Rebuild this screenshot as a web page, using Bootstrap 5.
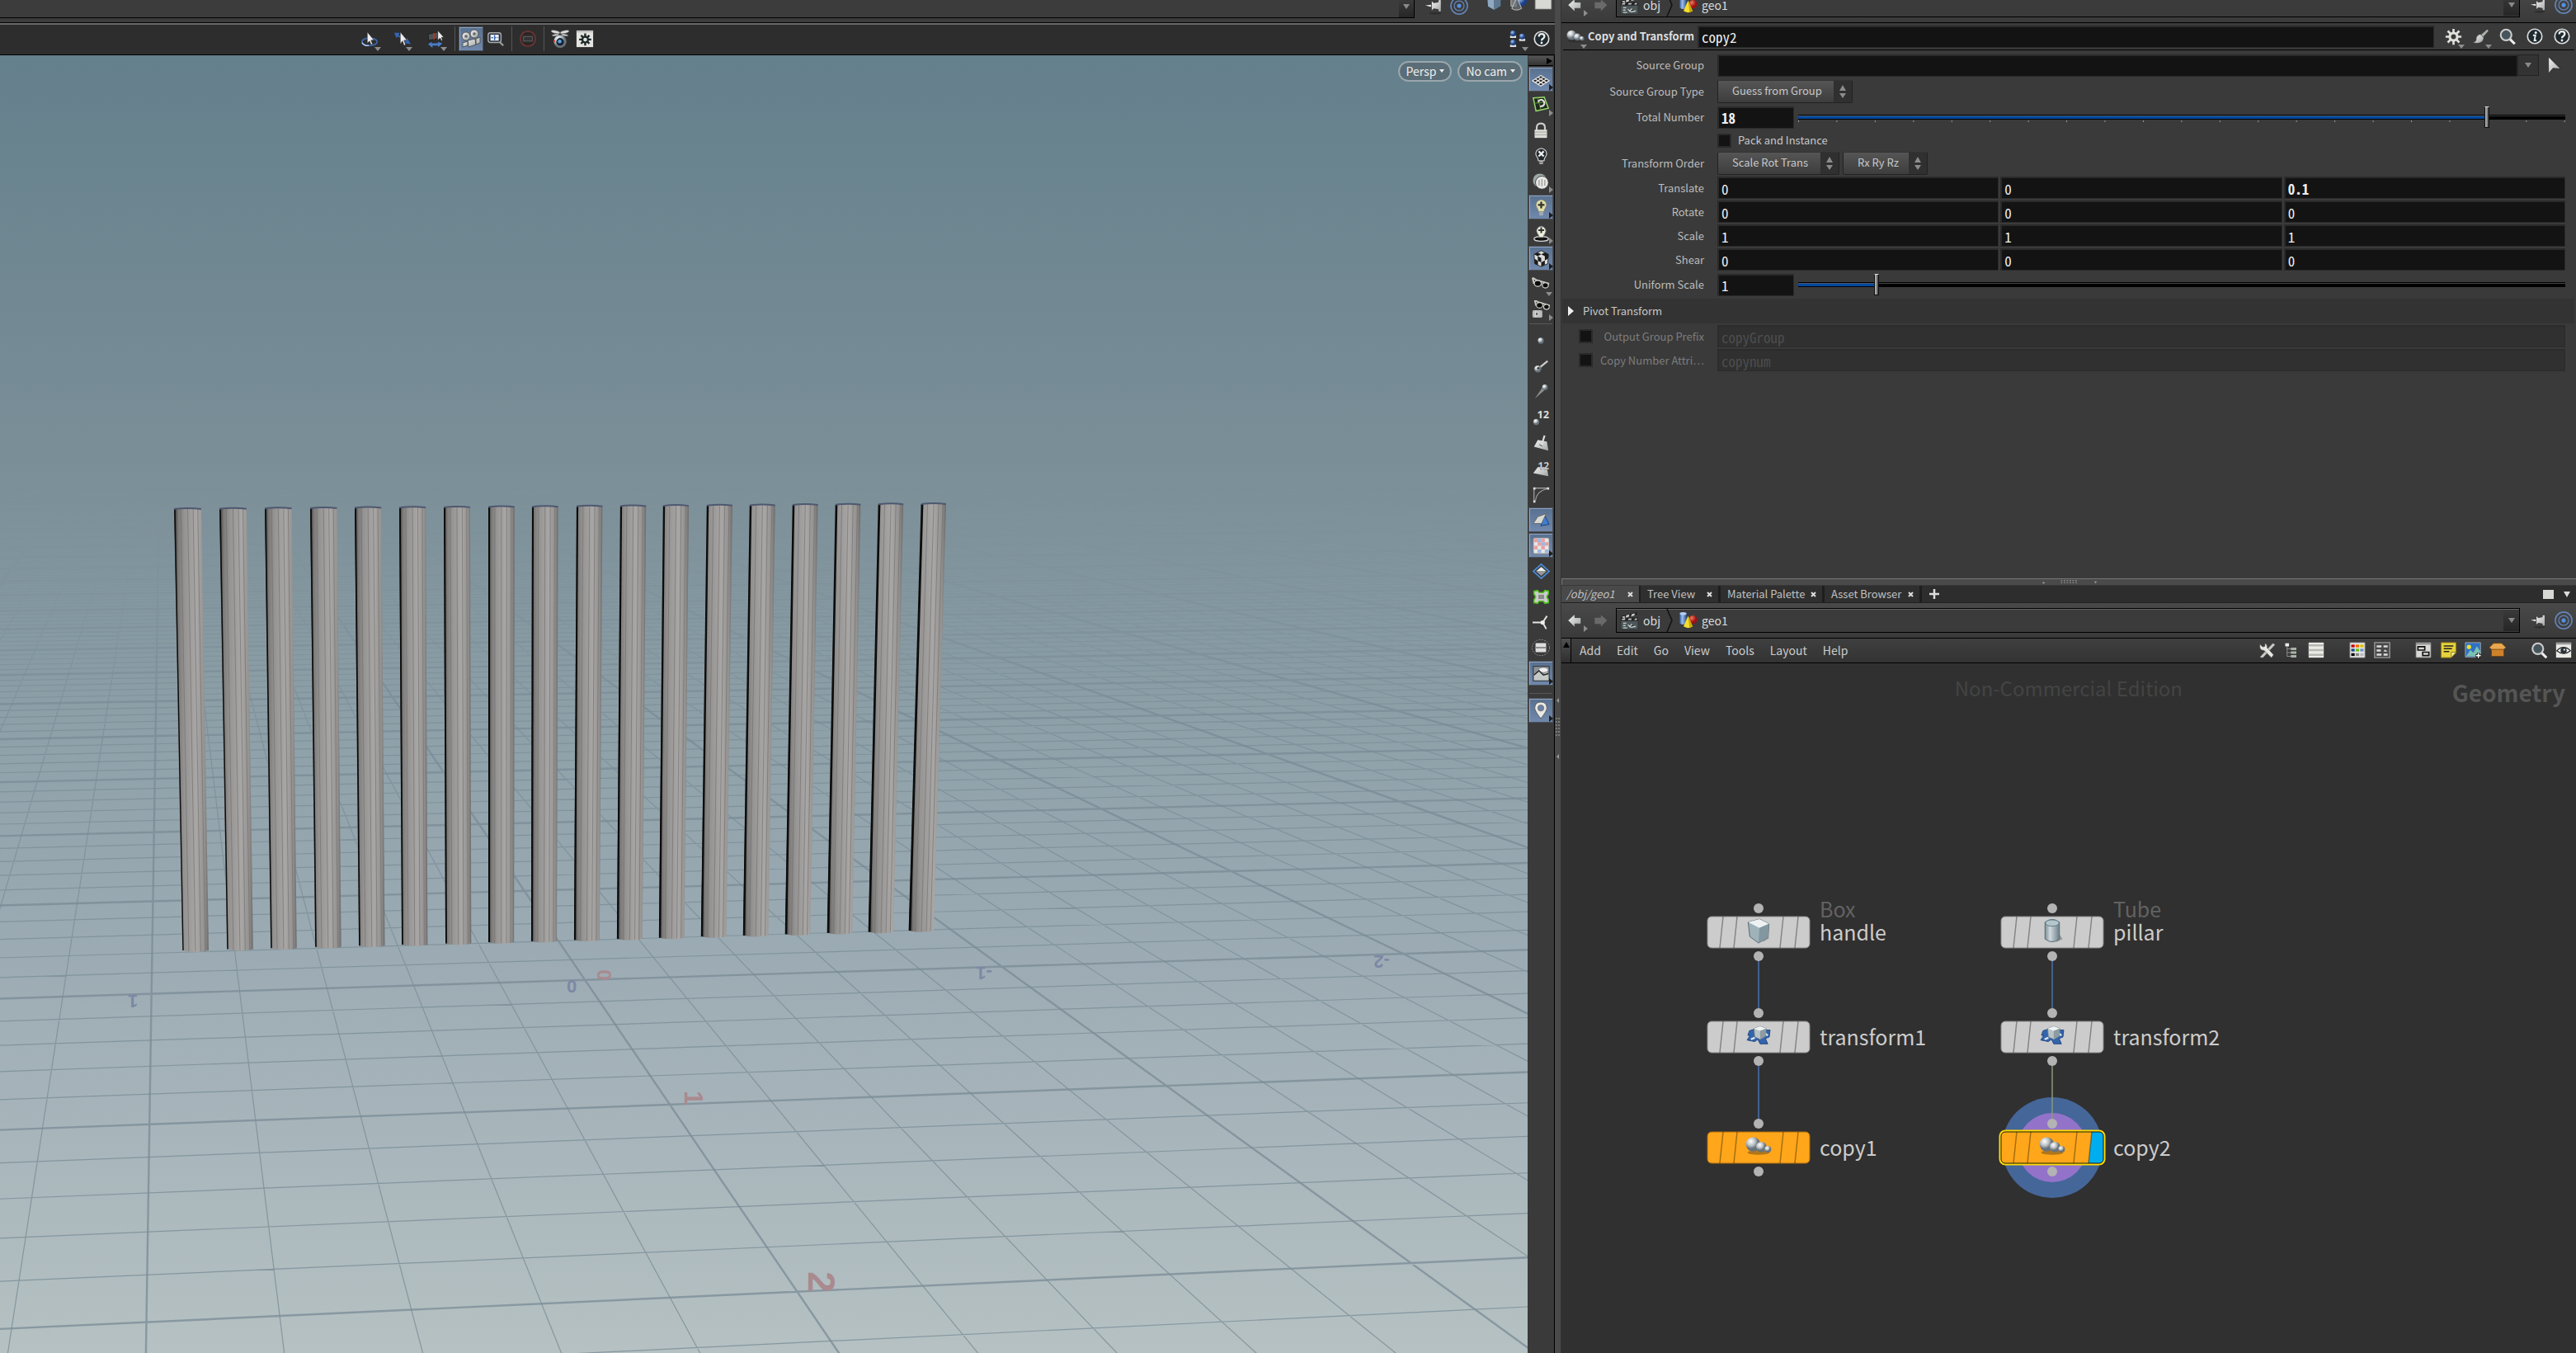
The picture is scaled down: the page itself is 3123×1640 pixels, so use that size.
<!DOCTYPE html>
<html lang="en" data-bs-theme="dark">
<head>
<meta charset="utf-8">
<meta name="viewport" content="width=device-width, initial-scale=1">
<title>Geometry editor</title>
<link href="https://cdn.jsdelivr.net/npm/bootstrap@5.3.0/dist/css/bootstrap.min.css" rel="stylesheet">
<style>
:root{--ui:"Noto Sans CJK SC","Open Sans",sans-serif;--code:"Noto Sans Mono CJK SC","DejaVu Sans Mono",monospace}
body{font-family:var(--ui);font-size:13px;line-height:20px;color:#c8c8c8;background:#3a3a3a}
svg{display:block;flex:none;overflow:visible}
a{color:inherit;text-decoration:none}
button{font:inherit;color:inherit}
.pane-left{flex:1885 1 0}
.pane-right{flex:1230 1 0;background:#3a3a3a}
.icon-btn{background:none;border:0;padding:0;width:30px;height:30px;flex:none;display:flex;align-items:center;justify-content:center;position:relative}
.icon-btn.more::after{content:"";position:absolute;right:1px;bottom:0;border:4px solid transparent;border-top:5px solid #8d8d8d;border-bottom:0}
.icon-btn.side::after{content:"";position:absolute;right:0;bottom:1px;border:4px solid transparent;border-left:5px solid #8d8d8d;border-right:0}
.icon-btn.on{background:linear-gradient(#58708f,#7089ad);box-shadow:inset 0 0 0 1px #4a4f57,inset 2px 2px 0 #8fa4c0}
.icon-btn.on.side::after{border-left-color:#1c1c1c}
.vsep{width:1px;height:30px;background:#555;flex:none}

/* viewport side */
.crop-bar{height:27px;background:#3c3c3c;overflow:hidden}
.combo-strip{height:22px;border-right:1px solid #000;border-bottom:1px solid #000}
.combo-end{width:18px;height:21px;background:linear-gradient(#3a3a3a,#262626)}
.tool-bar{height:40px;background:#2d2d2d;border-top:1px solid #000;border-bottom:1px solid #000;box-shadow:inset 0 2px 0 #6a6a6a;padding-left:433px;padding-right:1px}
.view3d{background:#67818d;overflow:hidden;min-width:0}
.view3d>svg{position:absolute;inset:0;width:100%;height:100%}
.pills{position:absolute;top:7px;right:6px;gap:7px}
.pill{height:25px;border:2px solid #9aa7ad;border-radius:13px;background:#5b6d76;color:#eee;padding:0 7px 2px 8px;font-size:14px;line-height:18px}
.side-bar{width:33px;background:#3a3a3a;border-right:1px solid #000}
.side-bar .icon-btn{width:30px;height:30px;margin:0 0 1px 1px}
.side-top{height:12px;margin:1px 1px 1px;background:linear-gradient(#555,#333);border:0;border-bottom:1px solid #000;padding:0}
.hsep{height:1px;background:#585858;margin:1px 2px 5px;flex:none}
.split-v{width:8px;background:#4a4a4a;border-right:1px solid #333}
.split-v svg{margin-top:845px}
.split-h{height:8px;background:#4a4a4a;border-top:1px solid #777;border-left:1px solid #777}

/* path bars */
.path-row{height:42px;padding-left:2px;background:linear-gradient(#494949,#3a3a3a)}
.path-box{height:30px;border:1px solid #000;box-shadow:inset 0 1px 0 #666;background:#3b3b3b;font-size:14px;color:#ddd}
.path-box a{display:flex;align-items:center;gap:5px}
.path-end{width:19px;height:26px;margin-top:1px;background:linear-gradient(#3a3a3a,#262626)}
.path-clip{height:27px;overflow:hidden;border-bottom:1px solid #000;box-sizing:content-box}
.path-clip .path-row{margin-top:-15px}

/* parameters */
.op-head{height:33px;margin:0 2px;border-bottom:1px solid #000;color:#ddd}
.op-name{font-weight:700}
.fld{background:#131313;border:2px solid #2a2a2a;border-bottom-width:1px;border-right-width:1px;color:#eee;font-family:var(--code);font-size:17px;line-height:20px;height:27px;padding:0 3px;min-width:0;border-radius:0;outline:0}
.fld:disabled{background:#303030;border-color:#2b2b2b;color:#4d4d4d}
.prow{height:29px;padding-right:13px;display:flex;align-items:center}
.prow.tall{height:32px}
.prow.mid{height:30px}
.prow.low{height:26px}
.plabel{width:173px;text-align:right;flex:none;color:#bdbdbd;white-space:nowrap}
.plabel.checked-label{display:flex;align-items:center;justify-content:space-between;padding-left:21px}
.pbody{margin-left:16px}
.num{width:93px;flex:none}
.list-btn{width:26px;height:26px;background:#333;border:1px solid #222}
.pick{appearance:none;height:28px;border:1px solid #222;border-top-color:#333;border-radius:2px;color:#c8c8c8;font-size:13px;line-height:20px;padding:0 30px 2px 17px;
 background:url("data:image/svg+xml,%3Csvg xmlns='http://www.w3.org/2000/svg' viewBox='0 0 22 26'%3E%3Cpath fill='%23303030' d='M0 0h22v26H0z'/%3E%3Cpath fill='%238c8c8c' d='M11 5l4 7H7zM11 21l4-6H7z'/%3E%3C/svg%3E") right center/22px 26px no-repeat,linear-gradient(#555,#3d3d3d)}
.pick-a{width:164px}.pick-b{width:148px}.pick-c{width:103px}
.tick{appearance:none;width:17px;height:17px;margin:0;background:#131313;border:2px solid #2a2a2a;flex:none}
.slide{appearance:none;height:27px;margin:0 0 0 5px;background:linear-gradient(#000,#000) 0 10px/100% 1px no-repeat,linear-gradient(#00489c,#00489c) 0 12px/var(--at) 3px no-repeat,linear-gradient(#4a5a70,#4a5a70) 0 11px/var(--at) 1px no-repeat,linear-gradient(#000,#000) 0 12px/100% 4px no-repeat,linear-gradient(#444,#444) 0 11px/100% 1px no-repeat;min-width:0}
.slide.ticked{background:linear-gradient(#000,#000) 0 10px/100% 1px no-repeat,linear-gradient(#00489c,#00489c) 0 12px/var(--at) 3px no-repeat,linear-gradient(#4a5a70,#4a5a70) 0 11px/var(--at) 1px no-repeat,linear-gradient(#000,#000) 0 12px/100% 4px no-repeat,linear-gradient(90deg,#999 1px,transparent 1px) 0 17px/calc((100% - 1px)/20) 2px repeat-x}
.slide::-webkit-slider-thumb{appearance:none;width:6px;height:26px;background:linear-gradient(90deg,#bbb,#7a7a7a 70%,#222);border:1px solid #111;border-top-color:#ddd;border-radius:0}
.fold{height:30px;margin:1px 2px 1px 1px;background:#333;border:0;padding:0 0 0 7px;text-align:left;gap:10px}
.faint{color:#7d7d7d}
.params{height:701px;overflow:hidden}
.params form{padding-top:2px}

/* network */
.tabs-row{height:22px;background:#2d2d2d;border-bottom:1px solid #202020;border-top:1px solid #383838}
.tab-i{background:#2f2f2f;border:0;border-right:3px solid #1e1e1e;padding:0 7px 0 8px;display:flex;align-items:center;justify-content:space-between;white-space:nowrap;color:#c0c0c0}
.tab-i.cur{background:#494949;font-style:italic;border-right-width:2px;padding-left:6px}
.tab-tools{gap:12px;padding-right:7px}
.menu-row{height:31px;border-top:1px solid #000;border-bottom:1px solid #000;background:linear-gradient(#3f3f3f,#333)}
.menu-row nav{gap:19px;padding-left:10px;padding-bottom:2px}
.menu-row a{font-size:14px;line-height:24px;color:#ccc}
.menu-row .icon-btn{height:28px}
.set-apart{margin-left:20px}
.fold-up{width:12px;border:0;border-right:1px solid #000;background:linear-gradient(#505050,#2e2e2e);padding:0}
.net{background:#303030;overflow:hidden;min-height:0}
.net-note{position:absolute;top:14px;right:477px;font-size:24px;line-height:32px;color:#444}
.net-kind{position:absolute;top:18px;right:13px;font-size:28px;line-height:34px;font-weight:700;color:#555}
.net>svg{position:absolute;left:0;top:0;width:1px;height:1px}
.node-tag{position:absolute;font-size:25px;line-height:28px;color:#ccc;white-space:nowrap}
.node-tag .kind{display:block;color:#626262}
</style>
<script src="https://cdn.jsdelivr.net/npm/bootstrap@5.3.0/dist/js/bootstrap.bundle.min.js"></script>
</head>
<body class="vh-100 overflow-hidden d-flex">

<svg width="0" height="0" class="position-absolute" aria-hidden="true">
<defs>
<linearGradient id="gl" x1="0" y1="0" x2="1" y2="1"><stop offset="0" stop-color="#f4f4f2"/><stop offset="1" stop-color="#a0a4a4"/></linearGradient>
<radialGradient id="gb" cx=".35" cy=".3"><stop offset="0" stop-color="#fff"/><stop offset=".6" stop-color="#b9c0c4"/><stop offset="1" stop-color="#68727a"/></radialGradient>
<radialGradient id="gblue" cx=".35" cy=".3"><stop offset="0" stop-color="#a8c8f4"/><stop offset="1" stop-color="#1b3f86"/></radialGradient>
<radialGradient id="gred" cx=".35" cy=".3"><stop offset="0" stop-color="#f07a60"/><stop offset="1" stop-color="#a01010"/></radialGradient>
<linearGradient id="gcyl"><stop offset="0" stop-color="#7c8c94"/><stop offset=".35" stop-color="#cfd9de"/><stop offset="1" stop-color="#6e7f88"/></linearGradient>
<linearGradient id="gbcyl"><stop offset="0" stop-color="#3d69ac"/><stop offset=".4" stop-color="#9dbde8"/><stop offset="1" stop-color="#2b4f90"/></linearGradient>
<symbol id="i-cur" viewBox="0 0 24 24"><path d="M4 1v22l6-7 10 1z" fill="url(#gl)" stroke="#222" stroke-width=".8"/></symbol>
<symbol id="i-orbit" viewBox="0 0 24 24"><ellipse cx="12" cy="16" rx="10" ry="5" fill="none" stroke="#3e66a8" stroke-width="2"/><path d="M2 17q3 5 9 4" stroke="#b9cdec" fill="none" stroke-width="1.500"/><path d="M9 3v15l3-3 2 5 2-1-2-5 4 0z" fill="#eee" stroke="#222" stroke-width=".6"/></symbol>
<symbol id="i-pan" viewBox="0 0 24 24"><path d="M1 4l7 0-1 3 10 7 1-3 5 8-8-1 1-2L6 9 4 11z" fill="#3565b2"/><path d="M9 3v16l3-4 2 6 2-1-2-6 4 0z" fill="#eee" stroke="#222" stroke-width=".6"/></symbol>
<symbol id="i-dolly" viewBox="0 0 24 24"><path d="M2 6l13-3v9L3 14z" fill="#4b5254" stroke="#1c1c1c"/><path d="M10 4v9" stroke="#d03020" stroke-width="1.400"/><path d="M2 19l5-3v2h8l0-2 6 2-5 5-1-2H8l0 3z" fill="#4a7cc6"/><path d="M15 1v13l3-3 2 4 1-1-1-4 3 0z" fill="#eee" stroke="#222" stroke-width=".6"/></symbol>
<symbol id="i-cams" viewBox="0 0 24 24"><g fill="url(#gl)" stroke="#444" stroke-width=".8"><circle cx="6" cy="9" r="5"/><circle cx="16" cy="6" r="5"/><path d="M8 14l9-2 1 7-9 3zM18 12l5-2v7l-5 2zM2 17l6-2v5l-6 2z"/></g><circle cx="6" cy="9" r="1.800" fill="#666"/><circle cx="16" cy="6" r="1.800" fill="#666"/></symbol>
<symbol id="i-frame" viewBox="0 0 24 24"><rect x="2" y="4" width="17" height="13" rx="3" fill="#26303c" stroke="#aaa" stroke-width="1.600"/><rect x="5" y="6.500" width="11" height="8" fill="#e8eef6"/><path d="M10.500 7v7M6 10.500h9" stroke="#2b5db0" stroke-width="1.600" stroke-dasharray="2.500 1.500"/><path d="M17 16l5 5" stroke="#999" stroke-width="2.500"/></symbol>
<symbol id="i-no" viewBox="0 0 24 24"><circle cx="12" cy="12" r="10" fill="#2b2525" stroke="#6c3434" stroke-width="2"/><rect x="6" y="9" width="12" height="6" fill="#333" stroke="#555" stroke-width="1.500"/></symbol>
<symbol id="i-fly" viewBox="0 0 24 24"><circle cx="12" cy="15.500" r="8.500" fill="url(#gb)"/><circle cx="12" cy="16" r="5" fill="#17202c"/><circle cx="11.500" cy="15.500" r="2.500" fill="#57a4dc"/><g fill="#ddd" stroke="#555" stroke-width=".6"><ellipse cx="6" cy="3" rx="6" ry="2" transform="rotate(12 6 3)"/><ellipse cx="18" cy="3" rx="6" ry="2" transform="rotate(-12 18 3)"/><ellipse cx="6" cy="7" rx="4.500" ry="1.300" transform="rotate(-10 6 7)"/><ellipse cx="18" cy="7" rx="4.500" ry="1.300" transform="rotate(10 18 7)"/></g><circle cx="4.500" cy="15" r="1.200" fill="#e22"/></symbol>
<symbol id="i-gearbox" viewBox="0 0 24 24"><rect x="1" y="1" width="22" height="22" fill="#e4e4e0"/><path d="M1 2.500h22" stroke="#bbb" stroke-width="2"/><g stroke="#1d2a2a" stroke-width="2.600"><path d="M12.500 5v16M4.500 13h16M7 7.500l11 11M18 7.500l-11 11"/></g><circle cx="12.500" cy="13" r="5" fill="#1d2a2a"/><circle cx="12.500" cy="13" r="2.500" fill="#e4e4e0"/></symbol>
<symbol id="i-gear" viewBox="0 0 24 24"><g stroke="#e0e0dc" stroke-width="3"><path d="M12 1v22M1 12h22M4 4l16 16M20 4L4 20"/></g><circle cx="12" cy="12" r="7" fill="#e0e0dc"/><circle cx="12" cy="12" r="3.400" fill="#3a3a3a"/></symbol>
<symbol id="i-pin" viewBox="0 0 24 24"><path d="M0 11.500l8-1v3z" fill="#eee"/><path d="M8 5l3 3 6-1V4h4v16h-4v-3l-6-1-3 3z" fill="url(#gl)" stroke="#222" stroke-width=".8"/><ellipse cx="13" cy="22" rx="8" ry="1.300" fill="#2c2c2c"/></symbol>
<symbol id="i-target" viewBox="0 0 24 24"><g fill="none" stroke="#6384b6"><circle cx="12" cy="12" r="11" stroke-width="1.800"/><circle cx="12" cy="12" r="6.500" stroke-width="1.400"/></g><circle cx="12" cy="12" r="2.800" fill="#5590e0"/></symbol>
<symbol id="i-cube" viewBox="0 0 24 24"><path d="M2 4l11-3 9 3v13l-10 6L3 18z" fill="#8fa9c2" stroke="#27323c"/><path d="M2 4l10 4 10-4-9-3z" fill="#dfe9f2"/><path d="M12 8l10-4v13l-10 6z" fill="#60788f"/></symbol>
<symbol id="i-shapes" viewBox="0 0 24 24"><path d="M2 0h7v17H2z" fill="#777" stroke="#bbb"/><circle cx="16" cy="10" r="7" fill="url(#gblue)"/><path d="M10 5L3 20q6 4 13 0z" fill="#6a7074" fill-opacity=".7" stroke="#ccc"/></symbol>
<symbol id="i-sq" viewBox="0 0 24 24"><path d="M1 0h22v21H1z" fill="#d8d8d4" stroke="#555"/></symbol>
<symbol id="i-people" viewBox="0 0 24 24"><g fill="#ddd"><path d="M3 8h8v3H3zM3 20h8v3H3zM15 12h8v3h-8z"/></g><circle cx="7" cy="5" r="3.800" fill="url(#gblue)"/><circle cx="7" cy="17" r="3.800" fill="url(#gblue)"/><circle cx="19" cy="9" r="3.800" fill="url(#gblue)"/></symbol>
<symbol id="i-help" viewBox="0 0 24 24"><circle cx="12" cy="12" r="10.500" fill="#1e2a30" stroke="#ddd" stroke-width="2"/><path d="M8 9q0-4 4-4t4 3.500q0 2-2 3.200t-2 3" fill="none" stroke="#eee" stroke-width="2.800"/><circle cx="12" cy="18" r="1.700" fill="#eee"/></symbol>
<symbol id="i-info" viewBox="0 0 24 24"><circle cx="12" cy="12" r="10.500" fill="#1e2a30" stroke="#ddd" stroke-width="2"/><circle cx="13.500" cy="6.500" r="1.800" fill="#eee"/><path d="M9.500 10.500h3.500l-1.500 7.500h3" fill="none" stroke="#eee" stroke-width="2.200"/></symbol>
<symbol id="i-find" viewBox="0 0 24 24"><path d="M15 15l7 7" stroke="#eee" stroke-width="3.500"/><circle cx="10" cy="9.500" r="7.500" fill="#46545c" stroke="#ccc" stroke-width="2.400"/></symbol>
<symbol id="i-brush" viewBox="0 0 24 24"><path d="M22 2l2 2-8 9-3-3z" fill="#aab0a8"/><path d="M12 9l5 5q-1 8-11 8l-5-1q6-1 5-6 1-5 6-6z" fill="url(#gl)" stroke="#444" stroke-width=".6"/></symbol>
<symbol id="i-balls" viewBox="0 0 24 24"><ellipse cx="12" cy="18" rx="10" ry="2" fill="#1c1c1c" opacity=".35"/><circle cx="7" cy="10.500" r="6.500" fill="url(#gb)"/><circle cx="14.500" cy="13" r="4.800" fill="url(#gb)"/><circle cx="20.500" cy="15" r="3" fill="url(#gb)"/></symbol>
<symbol id="i-back" viewBox="0 0 24 24"><path d="M1 12L11 3v5h9v9h-9v5z" fill="url(#gl)" stroke="#222" stroke-width=".6"/></symbol>
<symbol id="i-fwd" viewBox="0 0 24 24"><path d="M22 12L13 4v4H4v9h9v4z" fill="#6a6a6a"/></symbol>
<symbol id="i-clap" viewBox="0 0 24 24"><path d="M1 12h22v11H1z" fill="#4d5759" stroke="#2c3334"/><path d="M1 8h22v3.500H1zM1 6L21 1l1 3L2 9z" fill="#222"/><path d="M2 7l4-1v3zM8 5l4-1-1 3-4 1zM15 3.500l4-1-1 3-4 1zM3 9h4l-1 2H2zM11 9h4l-1 2h-4zM19 9h3l-1 2h-3z" fill="#ccc"/><path d="M4 15h4M4 18h3M4 21h5M10 17l4 3 6-1M12 20l3-4" stroke="#c8cccc" stroke-width="1.500"/></symbol>
<symbol id="i-geo" viewBox="0 0 24 24"><path d="M1 3q4-3 9 0v13q-4 3-9 0z" fill="url(#gbcyl)"/><ellipse cx="5.500" cy="3" rx="4.500" ry="2" fill="#b6cff0"/><circle cx="18.500" cy="11" r="5.500" fill="url(#gred)"/><path d="M12 6l6 14q-6 4-12 0z" fill="#f4de2c"/><path d="M12 6l2 16q3-1 4-2z" fill="#c9a90e"/></symbol>
<symbol id="i-grid" viewBox="0 0 24 24"><path d="M12 7l11 7-11 7-11-7z" fill="#222" stroke="#e6e6e6" stroke-width="1.400"/><path d="M8.300 9.300l11 7M4.700 11.700l11 7M15.700 9.300l-11 7M19.300 11.700l-11 7" stroke="#e6e6e6" stroke-width="1.500"/></symbol>
<symbol id="i-snap" viewBox="0 0 24 24"><path d="M1 2l16-1 6 16-18 4z" fill="#1f2a1c" stroke="#95d86a" stroke-width="1.800"/><path d="M7 1l5 18M2 10l18-2" stroke="#6ba24a"/><path d="M8 8q2-4 6-3 4 2 3 6-2 4-6 3" fill="none" stroke="#ddd" stroke-width="2.600"/></symbol>
<symbol id="i-lock" viewBox="0 0 24 24"><path d="M6 12V8q0-6 6-6t6 6v4" fill="none" stroke="#ccc" stroke-width="2.600"/><path d="M3 11h18v12H3z" fill="#dcdcd6"/><path d="M3 14.500h18M3 18.500h18" stroke="#9c9c98"/></symbol>
<symbol id="bulb" viewBox="0 0 24 24"><path d="M8 18q0-3-2-5.500-3-4 0-8.500 6-6 12 0 3 4.500 0 8.500-2 2.500-2 5.500z"/><path d="M9 19.500h6M9.500 22h5" stroke="#bbb" stroke-width="1.600"/></symbol>
<symbol id="i-bulbx" viewBox="0 0 24 24"><use href="#bulb" fill="#20282c" stroke="#ccc" stroke-width="1.400"/><path d="M8.500 5l7 7M15.500 5l-7 7" stroke="#eee" stroke-width="2.600"/></symbol>
<symbol id="i-bulb" viewBox="0 0 24 24"><use href="#bulb" fill="#e0dfa6" stroke="#777"/><path d="M12 4v9M7.500 8.500h9" stroke="#333" stroke-width="2.600"/></symbol>
<symbol id="i-bulbs" viewBox="0 0 24 24"><ellipse cx="12" cy="20" rx="10" ry="3.300" fill="#111" stroke="#ddd" stroke-width="1.400"/><path d="M9 18q0-3-2-5-3-4 0-8 5-5 10 0 3 4 0 8-2 2-2 5z" fill="#eeeede" stroke="#777"/><path d="M12 4v8M8 8h8" stroke="#333" stroke-width="2.300"/></symbol>
<symbol id="i-hq" viewBox="0 0 24 24"><circle cx="10" cy="10" r="9.500" fill="#9fa8a8"/><circle cx="13" cy="13" r="9" fill="#e8e8e4" stroke="#333"/><path d="M9 9v8M13 8v10M17 9v8" stroke="#999" stroke-width="1.500"/></symbol>
<symbol id="i-check" viewBox="0 0 24 24"><path d="M2 6l10-5 10 5-1 13-9 4-9-4z" fill="#dcdcda" stroke="#222"/><path d="M2 6l5-2.500L12 6 7 8.500zM12 6l5-2.500L22 6l-5 2.500zM7 8.500l5 2.500v6l-4.500-2zM17 8.500l5-2.500-.5 6-4.500 2.500zM2.500 12l5 3v6L3 19zM12 17l5-2.500v6L12 23z" fill="#1c1c1c"/></symbol>
<symbol id="i-glass" viewBox="0 0 24 24"><path d="M1 4l5 3 17 5M1 4l2 8" stroke="#c8c8c0" stroke-width="2.200" fill="none"/><ellipse cx="8" cy="11.500" rx="4.600" ry="4" fill="#0c0c0c" stroke="#d8d8d0" stroke-width="1.300"/><ellipse cx="18" cy="14" rx="4" ry="3.600" fill="#0c0c0c" stroke="#d8d8d0" stroke-width="1.300"/></symbol>
<symbol id="i-glassp" viewBox="0 0 24 24"><use href="#i-glass" x="3" y="-4" width="22" height="22"/><rect x="1" y="13" width="13" height="10" rx="2" fill="#bbb"/><path d="M5 15v6l5-3z" fill="#555" stroke="#eee"/></symbol>
<symbol id="i-dot" viewBox="0 0 24 24"><circle cx="12" cy="12" r="4" fill="url(#gb)"/></symbol>
<symbol id="i-ptn" viewBox="0 0 24 24"><path d="M10 14L21 5" stroke="#ccc" stroke-width="2.400"/><circle cx="8" cy="15.500" r="4.600" fill="url(#gb)"/><circle cx="8.500" cy="14.500" r="1.500" fill="#333"/></symbol>
<symbol id="i-trail" viewBox="0 0 24 24"><path d="M4 21L15 5l4 3z" fill="#8c8c8c"/><circle cx="17.500" cy="6" r="3.800" fill="url(#gb)"/></symbol>
<symbol id="i-nrm" viewBox="0 0 24 24"><path d="M8 8l12 2 2 12-19-5z" fill="url(#gl)"/><path d="M13 15l4-13" stroke="#ddd" stroke-width="2.400"/><path d="M10 14l4 2" stroke="#444"/></symbol>
<symbol id="i-curve" viewBox="0 0 24 24"><path d="M2 22V3h19M4 20Q6 7 20 4" fill="none" stroke="#aaa" stroke-width="1.300"/><path d="M1 2h3v3H1zM20 2h3v3h-3zM1 20h3v3H1z" fill="#ddd"/></symbol>
<symbol id="i-face" viewBox="0 0 24 24"><path d="M17 6l6 12-11 2z" fill="#3d7ed4" stroke="#1d3c70"/><path d="M8 8l11-4-6 13H2z" fill="#d8d8d2" stroke="#666"/></symbol>
<symbol id="i-uv" viewBox="0 0 24 24"><rect x="1" y="1" width="22" height="22" rx="2" fill="#e6e6e6" stroke="#777"/><path d="M2 2h5v5H2zM12 2h5v5h-5zM7 7h5v5H7zM17 7h5v5h-5zM2 12h5v5H2zM12 12h5v5h-5z" fill="#e8a0a0"/><path d="M7 2h5v5H7zM12 7h5v5h-5zM7 17h5v5H7zM17 17h5v5h-5z" fill="#9cb8e0"/></symbol>
<symbol id="i-dia" viewBox="0 0 24 24"><path d="M12 2l11 10-11 10L1 12z" fill="#3f464c" stroke="#4a90e0" stroke-width="1.800"/><path d="M12 6l7 6H5z" fill="#eee"/><path d="M5 12h14l-7 6z" fill="#999"/></symbol>
<symbol id="i-hull" viewBox="0 0 24 24"><path d="M2 4l5-1 2 3h6l2-3 5 1v4l-2 3v2l2 3v4l-5 1-2-3H9l-2 3-5-1v-4l2-3v-2L2 8z" fill="#ccc" stroke="#4fbd1c" stroke-width="1.800"/><path d="M8 9h8v6H8z" fill="#8a8a8a"/></symbol>
<symbol id="i-axis" viewBox="0 0 24 24"><path d="M0 12h14M14 12l6-9M14 12l5 9" stroke="#e4e4e0" stroke-width="2.200"/><circle cx="14" cy="12" r="3" fill="#eee"/></symbol>
<symbol id="i-oval" viewBox="0 0 24 24"><ellipse cx="12" cy="12" rx="11.500" ry="10.500" fill="none" stroke="#999" stroke-dasharray="2 1.500"/><rect x="5" y="6" width="14" height="12" rx="1" fill="#ddd"/><path d="M5 12h14" stroke="#888" stroke-width="2"/></symbol>
<symbol id="i-pic" viewBox="0 0 24 24"><rect x="1" y="2" width="22" height="20" fill="#8a9296" stroke="#222"/><path d="M2 14l7-6 6 5 4-3 3 2v9H2z" fill="#c4c8c6"/><ellipse cx="15" cy="7" rx="6" ry="3" fill="#eee"/><path d="M2 14l7-6 6 6 7-2" stroke="#222" fill="none" stroke-width="1.500"/></symbol>
<symbol id="i-loc" viewBox="0 0 24 24"><path d="M12 23Q4 13 4 9q0-8 8-8t8 8q0 4-8 14z" fill="#e8e8e4" stroke="#555"/><circle cx="12" cy="9" r="4" fill="#6882a5" stroke="#777"/></symbol>
<symbol id="i-tools" viewBox="0 0 24 24"><path d="M2 21L20 2l3 2L6 22z" fill="#c8c8c4"/><path d="M2 3l4 4 3-1 0-4q4 2 3 6l9 10-3 4L8 12Q3 12 2 8z" fill="#e6e6e2" stroke="#444" stroke-width=".6"/></symbol>
<symbol id="i-tree" viewBox="0 0 24 24"><path d="M5 6v16h6M5 10h6M5 16h6" stroke="#aaa" fill="none"/><path d="M2 1h6v5H2z" fill="#eee"/><path d="M11 8h9v4h-9zM11 14h9v4h-9zM11 20h9v4h-9z" fill="#aab2aa"/></symbol>
<symbol id="i-list" viewBox="0 0 24 24"><path d="M1 1h22v22H1z" fill="#eaeae6"/><path d="M1 5h22M1 12h22M1 19h22" stroke="#b8b8b2" stroke-width="3"/></symbol>
<symbol id="i-pal" viewBox="0 0 24 24"><path d="M1 1h22v22H1z" fill="#e8e8e8" stroke="#777"/><path d="M3 4h5v4H3z" fill="#c00"/><path d="M9.500 4h5v4h-5z" fill="#e87000"/><path d="M16 4h5v4h-5z" fill="#d8c000"/><path d="M3 10h5v4H3z" fill="#1b4a88"/><path d="M9.500 10h5v4h-5z" fill="#6abf10"/><path d="M16 10h5v4h-5z" fill="#6a94c8"/><path d="M3 16.500h5v4H3z" fill="#000"/><path d="M9.500 16.500h5v4h-5z" fill="#888"/><path d="M16 16.500h5v4h-5z" fill="#bbb"/></symbol>
<symbol id="i-shp" viewBox="0 0 24 24"><path d="M1 1h22v22H1z" fill="#484848" stroke="#999" stroke-width="1.600"/><path d="M4 5h7v3H4zM14 5h6v3h-6zM4 11h6v3H4zM16 11l4 3h-6zM4 17h7v3H4zM14 17h6v3h-6z" fill="#ddd"/></symbol>
<symbol id="i-box" viewBox="0 0 24 24"><path d="M1 1h22v22H1z" fill="#d8d8d4" stroke="#555"/><path d="M1 3h22" stroke="#888" stroke-width="2"/><path d="M4 7h10v5H4zM11 15h9v5h-9z" fill="none" stroke="#111" stroke-width="2"/></symbol>
<symbol id="i-note" viewBox="0 0 24 24"><path d="M1 1h22v15l-7 7H1z" fill="#e6d23c" stroke="#7a6a10"/><path d="M23 15h-7v8z" fill="#fff39a" stroke="#7a6a10"/><path d="M5 6h14M5 10h12M5 14h8" stroke="#222" stroke-width="1.800"/></symbol>
<symbol id="i-img" viewBox="0 0 24 24"><path d="M1 1h21v20H1z" fill="#2f72c4" stroke="#aaa"/><circle cx="6" cy="7" r="3" fill="#f0e030"/><path d="M2 20l6-9 4 4 5-9 5 8v6z" fill="#7bc0b0"/><path d="M19 15v8M15 19h8" stroke="#000" stroke-width="4"/><path d="M19 15.500v7M15.500 19h7" stroke="#fff" stroke-width="1.800"/></symbol>
<symbol id="i-crate" viewBox="0 0 24 24"><path d="M3 9h18v12H3z" fill="#cf822a" stroke="#70400c"/><path d="M0 8l6-6h12l6 6-3 3H3z" fill="#e9a850" stroke="#70400c"/></symbol>
<symbol id="i-eye" viewBox="0 0 24 24"><path d="M1 1h22v22H1z" fill="#eaeae6"/><path d="M1 2.500h22" stroke="#999" stroke-width="3"/><path d="M2 13q10-10 20 0-10 8-20 0z" fill="#fff" stroke="#222" stroke-width="1.500"/><circle cx="12" cy="12.500" r="4.500" fill="#2a3238"/><circle cx="13" cy="11.500" r="1.300" fill="#fff"/></symbol>
<symbol id="n-cube" viewBox="0 0 30 32"><path d="M20 30l8-5-2-5z" fill="#999"/><path d="M2 5l14-4 12 6-1 17-12 7L4 23z" fill="#9eb2ba" stroke="#59656b"/><path d="M2 5l14-4 12 6-12 5z" fill="#edf1f2"/><path d="M16 12l12-5-1 17-12 7z" fill="#8297a0"/></symbol>
<symbol id="n-tube" viewBox="0 0 30 32"><path d="M20 30l8-4-4-6z" fill="#999"/><path d="M6 5q9-7 18 0v21q-9 7-18 0z" fill="url(#gcyl)" stroke="#4d6a74"/><ellipse cx="15" cy="6" rx="8.500" ry="4" fill="#b5c5cc" stroke="#5c7c86"/></symbol>
<symbol id="n-xf" viewBox="0 0 32 28"><path d="M4 7l9-3 3 5 6-3 9 0-1 9-5 2 3 7-10 0-3-6-4 3-10-2 4-6-3 0z" fill="#3465ac" stroke="#1f4380"/><path d="M14 14l5 3M6 18l5-2M24 10l4 3" stroke="#dfe6f0" stroke-width="2.500"/><path d="M10 4l8-3 8 3-1 10-7 4-7-3z" fill="#b9c4c9" stroke="#6a757b" stroke-width=".7"/><path d="M10 4l8-3 8 3-8 3z" fill="#f0f3f4"/><path d="M18 7l8-3-1 10-7 4z" fill="#8d9ba2"/></symbol>
<symbol id="grip-v" viewBox="0 0 8 76"><path d="M2 4l3-3v6zM2 72l3-3v6z" fill="#999"/><path d="M2 25v24M5 25v24" stroke="#888" stroke-width="1.500" stroke-dasharray="2 2"/></symbol>
<symbol id="grip-h" viewBox="0 0 76 8"><path d="M0 6l2-3 2 3zM72 3h4l-2 3z" fill="#999"/><path d="M26 2h24M26 5h24" stroke="#888" stroke-width="1.500" stroke-dasharray="2 2"/></symbol>
<symbol id="dn" viewBox="0 0 10 8"><path d="M1 1h8l-4 6z" fill="#8a8a8a"/></symbol>
</defs>
</svg>

<main class="pane-left d-flex flex-column" style="min-width:0">
  <div class="crop-bar d-flex align-items-start">
    <div class="combo-strip flex-grow-1 d-flex justify-content-end"><div class="combo-end d-flex justify-content-center pt-1"><svg width="10" height="8"><use href="#dn"/></svg></div></div>
    <div class="d-flex" style="width:170px;padding-left:9px">
      <button class="icon-btn" aria-label="Pin"><svg width="22" height="22" class="mb-4"><use href="#i-pin" y="4"/></svg></button>
      <button class="icon-btn me-2" aria-label="Follow"><svg width="22" height="22" class="mb-4"><use href="#i-target" y="4"/></svg></button>
      <button class="icon-btn ms-1" aria-label="Shading"><svg width="20" height="20" class="mb-4"><use href="#i-cube"/></svg></button>
      <button class="icon-btn" aria-label="Display shapes"><svg width="22" height="22" class="mb-4"><use href="#i-shapes"/></svg></button>
      <button class="icon-btn" aria-label="Layout"><svg width="22" height="22" class="mb-4"><use href="#i-sq"/></svg></button>
    </div>
  </div>
  <div class="tool-bar d-flex align-items-center">
    <button class="icon-btn more" aria-label="Tumble"><svg width="22" height="22"><use href="#i-orbit"/></svg></button>
    <button class="icon-btn more mx-2 ps-1" aria-label="Pan"><svg width="22" height="22"><use href="#i-pan"/></svg></button>
    <button class="icon-btn more me-2 ms-1" aria-label="Dolly"><svg width="22" height="22"><use href="#i-dolly"/></svg></button>
    <div class="vsep me-1"></div>
    <button class="icon-btn on" aria-label="Cameras"><svg width="24" height="24"><use href="#i-cams"/></svg></button>
    <button class="icon-btn" aria-label="Frame view"><svg width="22" height="22"><use href="#i-frame"/></svg></button>
    <div class="vsep mx-1"></div>
    <button class="icon-btn" aria-label="Lock off"><svg width="22" height="22"><use href="#i-no"/></svg></button>
    <div class="vsep mx-1"></div>
    <button class="icon-btn" aria-label="Fly camera"><svg width="22" height="22"><use href="#i-fly"/></svg></button>
    <button class="icon-btn" aria-label="View options"><svg width="22" height="22"><use href="#i-gearbox"/></svg></button>
    <button class="icon-btn more ms-auto" aria-label="Users"><svg width="22" height="22"><use href="#i-people"/></svg></button>
    <button class="icon-btn" aria-label="Help"><svg width="20" height="20"><use href="#i-help"/></svg></button>
  </div>
  <div class="d-flex flex-grow-1" style="min-height:0">
    <section class="view3d flex-grow-1 position-relative" aria-label="3D view">
      <svg id="scene" viewBox="0 67 1852 1573" preserveAspectRatio="xMidYMid slice">
        <defs>
          <linearGradient id="sky" x1="0" y1="67" x2="0" y2="1640" gradientUnits="userSpaceOnUse"><stop offset="0" stop-color="#64808c"/><stop offset=".32" stop-color="#7b8f98"/><stop offset=".5" stop-color="#8c9fa7"/><stop offset=".75" stop-color="#a1afb7"/><stop offset="1" stop-color="#b5c1c2"/></linearGradient>
          <linearGradient id="fade" x1="0" y1="590" x2="0" y2="860" gradientUnits="userSpaceOnUse"><stop offset="0" stop-color="#000"/><stop offset=".5" stop-color="#777"/><stop offset="1" stop-color="#fff"/></linearGradient>
          <mask id="haze" maskUnits="userSpaceOnUse" x="0" y="67" width="1852" height="1573"><path d="M0 67h1852v1573H0z" fill="url(#fade)"/></mask>
          <linearGradient id="pipe"><stop offset="0" stop-color="#1c1c1c"/><stop offset=".06" stop-color="#555"/><stop offset=".12" stop-color="#7c7a79"/><stop offset=".3" stop-color="#969493"/><stop offset=".65" stop-color="#a9a7a5"/><stop offset=".88" stop-color="#949290"/><stop offset="1" stop-color="#6c6a6a"/></linearGradient>
        </defs>
        <path d="M0 67h1852v1573H0z" fill="url(#sky)"/>
        <g id="floor" mask="url(#haze)" fill="none"></g>
        <g font-family="Liberation Sans" font-weight="700" text-anchor="middle" font-size="22">
          <g fill="#7d88a5"><text transform="translate(161 1206) rotate(180)">1</text><text transform="translate(693 1188) rotate(180)">0</text><text transform="translate(1193 1172) rotate(180)">-1</text><text transform="translate(1675 1158) rotate(180)">-2</text></g>
          <g fill="#a98a8f"><text transform="translate(724 1182) rotate(90)" font-size="24">0</text><text transform="translate(830 1331) rotate(90)" font-size="32">1</text><text transform="translate(980 1554) rotate(90)" font-size="46">2</text></g>
        </g>
        <g id="pillars"></g>
      </svg>
      <div class="pills d-flex">
        <button class="pill d-flex align-items-center gap-1">Persp<svg width="6" height="4" viewBox="0 0 6 4"><path d="M0 0h6L3 4z" fill="#eee"/></svg></button>
        <button class="pill d-flex align-items-center gap-1">No cam<svg width="6" height="4" viewBox="0 0 6 4"><path d="M0 0h6L3 4z" fill="#eee"/></svg></button>
      </div>
    </section>
    <aside class="side-bar d-flex flex-column" aria-label="Display options">
      <button class="side-top d-flex justify-content-end align-items-center" aria-label="Collapse"><svg width="9" height="9" viewBox="0 0 9 9"><path d="M1 1v8l7-4z" fill="#000"/></svg></button>
      <button class="icon-btn side on" aria-label="Grid"><svg width="22" height="22"><use href="#i-grid"/></svg></button>
      <button class="icon-btn side" aria-label="Construction plane"><svg width="20" height="20"><use href="#i-snap"/></svg></button>
      <button class="icon-btn" aria-label="Lock"><svg width="20" height="20"><use href="#i-lock"/></svg></button>
      <button class="icon-btn" aria-label="No lighting"><svg width="21" height="21"><use href="#i-bulbx"/></svg></button>
      <button class="icon-btn side" aria-label="Headlight"><svg width="21" height="21"><use href="#i-hq"/></svg></button>
      <button class="icon-btn side on" aria-label="Normal lighting"><svg width="21" height="21"><use href="#i-bulb"/></svg></button>
      <button class="icon-btn side" aria-label="Shadows"><svg width="21" height="21"><use href="#i-bulbs"/></svg></button>
      <button class="icon-btn side on" aria-label="Materials"><svg width="21" height="21"><use href="#i-check"/></svg></button>
      <button class="icon-btn more" aria-label="Visibility"><svg width="22" height="22"><use href="#i-glass"/></svg></button>
      <button class="icon-btn side" aria-label="Visualizers"><svg width="22" height="22"><use href="#i-glassp"/></svg></button>
      <div class="hsep"></div>
      <button class="icon-btn" aria-label="Points"><svg width="22" height="22"><use href="#i-dot"/></svg></button>
      <button class="icon-btn" aria-label="Point normals"><svg width="22" height="22"><use href="#i-ptn"/></svg></button>
      <button class="icon-btn" aria-label="Point trails"><svg width="22" height="22"><use href="#i-trail"/></svg></button>
      <button class="icon-btn" aria-label="Point numbers"><svg width="22" height="22" viewBox="0 0 24 24"><circle cx="6" cy="18" r="4" fill="url(#gb)"/><text x="7" y="13" font-size="14" font-weight="700" fill="#ddd" font-family="Noto Sans">12</text></svg></button>
      <button class="icon-btn" aria-label="Primitive normals"><svg width="22" height="22"><use href="#i-nrm"/></svg></button>
      <button class="icon-btn" aria-label="Primitive numbers"><svg width="22" height="22" viewBox="0 0 24 24"><path d="M8 10l12 0 2 12-20-4z" fill="url(#gl)"/><text x="8" y="13" font-size="13" font-weight="700" fill="#eee" stroke="#333" stroke-width=".4" font-family="Noto Sans">12</text></svg></button>
      <button class="icon-btn" aria-label="Curve hulls"><svg width="21" height="21"><use href="#i-curve"/></svg></button>
      <button class="icon-btn on" aria-label="Backfaces"><svg width="22" height="22"><use href="#i-face"/></svg></button>
      <button class="icon-btn side on" aria-label="UV"><svg width="21" height="21"><use href="#i-uv"/></svg></button>
      <button class="icon-btn" aria-label="Handles"><svg width="21" height="21"><use href="#i-dia"/></svg></button>
      <button class="icon-btn" aria-label="Hull"><svg width="21" height="21"><use href="#i-hull"/></svg></button>
      <button class="icon-btn" aria-label="Axis"><svg width="21" height="21"><use href="#i-axis"/></svg></button>
      <button class="icon-btn" aria-label="Mask"><svg width="22" height="22"><use href="#i-oval"/></svg></button>
      <button class="icon-btn side on" aria-label="Background image"><svg width="21" height="21"><use href="#i-pic"/></svg></button>
      <div class="hsep mt-2"></div>
      <button class="icon-btn side on" aria-label="Markers"><svg width="22" height="22"><use href="#i-loc"/></svg></button>
    </aside>
  </div>
</main>

<div class="split-v"><svg width="8" height="76"><use href="#grip-v"/></svg></div>

<div class="pane-right d-flex flex-column" style="min-width:0">
  <section class="params d-flex flex-column flex-shrink-0" aria-label="Parameters">
    <div class="path-clip flex-shrink-0">
      <div class="path-row d-flex align-items-center">
        <button class="icon-btn side" aria-label="Back"><svg width="20" height="20"><use href="#i-back"/></svg></button>
        <button class="icon-btn" aria-label="Forward"><svg width="20" height="20"><use href="#i-fwd"/></svg></button>
        <nav class="path-box flex-grow-1 d-flex ms-1 ps-1" aria-label="Node path">
          <a href="#obj"><svg width="23" height="23"><use href="#i-clap"/></svg>obj</a>
          <svg width="14" height="28" viewBox="0 0 14 28" class="mx-1"><path d="M4 0l6 14-6 14" fill="none" stroke="#111" stroke-width="1.500"/></svg>
          <a href="#geo1"><svg width="23" height="22"><use href="#i-geo"/></svg>geo1</a>
          <span class="path-end ms-auto d-flex justify-content-center align-items-center"><svg width="10" height="8"><use href="#dn"/></svg></span>
        </nav>
        <button class="icon-btn ms-2" aria-label="Pin"><svg width="22" height="20"><use href="#i-pin"/></svg></button>
        <button class="icon-btn" aria-label="Follow"><svg width="22" height="22"><use href="#i-target"/></svg></button>
      </div>
    </div>
    <div class="op-head d-flex align-items-center flex-shrink-0">
      <button class="icon-btn more" aria-label="Operator"><svg width="22" height="22"><use href="#i-balls"/></svg></button>
      <label class="op-name text-nowrap me-1" for="opname">Copy and Transform</label>
      <input id="opname" class="fld flex-grow-1 me-2" value="copy2">
      <div class="d-flex" style="gap:3px">
        <button class="icon-btn more" aria-label="Settings"><svg width="21" height="21"><use href="#i-gear"/></svg></button>
        <button class="icon-btn more" aria-label="Brush"><svg width="22" height="20"><use href="#i-brush"/></svg></button>
        <button class="icon-btn" aria-label="Search"><svg width="22" height="21"><use href="#i-find"/></svg></button>
        <button class="icon-btn" aria-label="Info"><svg width="20" height="20"><use href="#i-info"/></svg></button>
        <button class="icon-btn" aria-label="Help"><svg width="20" height="20"><use href="#i-help"/></svg></button>
      </div>
    </div>
    <form class="d-flex flex-column">
      <div class="prow tall"><label class="plabel" for="sg">Source Group</label>
        <div class="pbody d-flex flex-grow-1 align-items-center"><input id="sg" class="fld flex-grow-1"><button type="button" class="icon-btn list-btn" aria-label="Group list"><svg width="10" height="8"><use href="#dn"/></svg></button><button type="button" class="icon-btn ms-1" style="margin-right:-2px" aria-label="Select group"><svg width="24" height="22"><use href="#i-cur"/></svg></button></div></div>
      <div class="prow tall"><label class="plabel" for="sgt">Source Group Type</label>
        <div class="pbody"><select id="sgt" class="pick pick-a d-block"><option>Guess from Group</option></select></div></div>
      <div class="prow mid"><label class="plabel" for="tn">Total Number</label>
        <div class="pbody d-flex flex-grow-1"><input id="tn" class="fld num fw-bold" value="18"><input type="range" class="slide ticked flex-grow-1" min="0" max="20" value="18" aria-label="Total Number" style="--at:90%"></div></div>
      <div class="prow low"><span class="plabel"></span>
        <div class="pbody d-flex align-items-center gap-2"><input type="checkbox" id="pk" class="tick"><label for="pk">Pack and Instance</label></div></div>
      <div class="prow mid"><label class="plabel" for="to">Transform Order</label>
        <div class="pbody d-flex gap-1"><select id="to" class="pick pick-b"><option>Scale Rot Trans</option></select><select class="pick pick-c" aria-label="Rotate order"><option>Rx Ry Rz</option></select></div></div>
      <div class="prow"><label class="plabel" for="t0">Translate</label>
        <div class="pbody d-flex flex-grow-1" style="gap:2px"><input id="t0" class="fld w-100" value="0"><input aria-label="Translate y" class="fld w-100" value="0"><input aria-label="Translate z" class="fld w-100 fw-bold" value="0.1"></div></div>
      <div class="prow"><label class="plabel" for="r0">Rotate</label>
        <div class="pbody d-flex flex-grow-1" style="gap:2px"><input id="r0" class="fld w-100" value="0"><input aria-label="Rotate y" class="fld w-100" value="0"><input aria-label="Rotate z" class="fld w-100" value="0"></div></div>
      <div class="prow"><label class="plabel" for="s0">Scale</label>
        <div class="pbody d-flex flex-grow-1" style="gap:2px"><input id="s0" class="fld w-100" value="1"><input aria-label="Scale y" class="fld w-100" value="1"><input aria-label="Scale z" class="fld w-100" value="1"></div></div>
      <div class="prow"><label class="plabel" for="h0">Shear</label>
        <div class="pbody d-flex flex-grow-1" style="gap:2px"><input id="h0" class="fld w-100" value="0"><input aria-label="Shear y" class="fld w-100" value="0"><input aria-label="Shear z" class="fld w-100" value="0"></div></div>
      <div class="prow tall"><label class="plabel" for="us">Uniform Scale</label>
        <div class="pbody d-flex flex-grow-1"><input id="us" class="fld num" value="1"><input type="range" class="slide flex-grow-1" min="0" max="10" value="1" aria-label="Uniform Scale" style="--at:10%"></div></div>
      <button type="button" class="fold d-flex align-items-center"><svg width="8" height="12" viewBox="0 0 8 12"><path d="M0 0v12l7-6z" fill="#eee"/></svg>Pivot Transform</button>
      <div class="prow"><div class="plabel checked-label"><input type="checkbox" id="og" class="tick"><label for="og" class="faint">Output Group Prefix</label></div>
        <div class="pbody d-flex flex-grow-1"><input class="fld flex-grow-1" value="copyGroup" disabled aria-label="Output Group Prefix"></div></div>
      <div class="prow"><div class="plabel checked-label"><input type="checkbox" id="cn" class="tick"><label for="cn" class="faint">Copy Number Attri…</label></div>
        <div class="pbody d-flex flex-grow-1"><input class="fld flex-grow-1" value="copynum" disabled aria-label="Copy Number Attribute"></div></div>
    </form>
  </section>

  <div class="split-h d-flex justify-content-center flex-shrink-0"><svg width="76" height="7"><use href="#grip-h"/></svg></div>
  <div class="tabs-row d-flex flex-shrink-0" role="tablist">
    <button class="tab-i cur" role="tab" style="width:96px">/obj/geo1<svg width="7" height="7" viewBox="0 0 7 7"><path d="M1 1l5 5M6 1L1 6" stroke="#ddd" stroke-width="2"/></svg></button>
    <button class="tab-i" role="tab" style="width:97px">Tree View<svg width="7" height="7" viewBox="0 0 7 7"><path d="M1 1l5 5M6 1L1 6" stroke="#ddd" stroke-width="2"/></svg></button>
    <button class="tab-i" role="tab" style="width:126px">Material Palette<svg width="7" height="7" viewBox="0 0 7 7"><path d="M1 1l5 5M6 1L1 6" stroke="#ddd" stroke-width="2"/></svg></button>
    <button class="tab-i" role="tab" style="width:118px">Asset Browser<svg width="7" height="7" viewBox="0 0 7 7"><path d="M1 1l5 5M6 1L1 6" stroke="#ddd" stroke-width="2"/></svg></button>
    <button class="icon-btn" style="height:20px" aria-label="New tab"><svg width="12" height="12" viewBox="0 0 12 12"><path d="M6 0v12M0 6h12" stroke="#ddd" stroke-width="2.500"/></svg></button>
    <div class="tab-tools ms-auto d-flex align-items-center"><svg width="13" height="11" viewBox="0 0 13 11"><path d="M0 0h13v11H0z" fill="#d8d8d4"/></svg><svg width="8" height="7" viewBox="0 0 8 7"><path d="M0 0h8L4 7z" fill="#ddd"/></svg></div>
  </div>
  <div class="path-row d-flex align-items-center flex-shrink-0">
    <button class="icon-btn side" aria-label="Back"><svg width="20" height="20"><use href="#i-back"/></svg></button>
    <button class="icon-btn" aria-label="Forward"><svg width="20" height="20"><use href="#i-fwd"/></svg></button>
    <nav class="path-box flex-grow-1 d-flex ms-1 ps-1" aria-label="Network path">
      <a href="#obj"><svg width="23" height="23"><use href="#i-clap"/></svg>obj</a>
      <svg width="14" height="28" viewBox="0 0 14 28" class="mx-1"><path d="M4 0l6 14-6 14" fill="none" stroke="#111" stroke-width="1.500"/></svg>
      <a href="#geo1"><svg width="23" height="22"><use href="#i-geo"/></svg>geo1</a>
      <span class="path-end ms-auto d-flex justify-content-center align-items-center"><svg width="10" height="8"><use href="#dn"/></svg></span>
    </nav>
    <button class="icon-btn ms-2" aria-label="Pin"><svg width="22" height="20"><use href="#i-pin"/></svg></button>
    <button class="icon-btn" aria-label="Follow"><svg width="22" height="22"><use href="#i-target"/></svg></button>
  </div>
  <div class="menu-row d-flex flex-shrink-0">
    <button class="fold-up" aria-label="Collapse"><svg width="11" height="26" viewBox="0 0 11 26"><path d="M2 9l4-7 4 7z" fill="#000"/></svg></button>
    <nav class="d-flex align-items-center"><a href="#add">Add</a><a href="#edit">Edit</a><a href="#go">Go</a><a href="#view">View</a><a href="#tools">Tools</a><a href="#layout">Layout</a><a href="#help">Help</a></nav>
    <div class="d-flex ms-auto">
      <button class="icon-btn" aria-label="Tools"><svg width="21" height="21"><use href="#i-tools"/></svg></button>
      <button class="icon-btn" aria-label="Tree"><svg width="18" height="20"><use href="#i-tree"/></svg></button>
      <button class="icon-btn" aria-label="List"><svg width="20" height="20"><use href="#i-list"/></svg></button>
      <button class="icon-btn set-apart" aria-label="Colors"><svg width="20" height="20"><use href="#i-pal"/></svg></button>
      <button class="icon-btn" aria-label="Shapes"><svg width="20" height="20"><use href="#i-shp"/></svg></button>
      <button class="icon-btn set-apart" aria-label="Network box"><svg width="20" height="20"><use href="#i-box"/></svg></button>
      <button class="icon-btn" aria-label="Sticky note"><svg width="21" height="20"><use href="#i-note"/></svg></button>
      <button class="icon-btn" aria-label="Background"><svg width="21" height="21"><use href="#i-img"/></svg></button>
      <button class="icon-btn" aria-label="Asset"><svg width="22" height="20"><use href="#i-crate"/></svg></button>
      <button class="icon-btn set-apart" aria-label="Find"><svg width="21" height="21"><use href="#i-find"/></svg></button>
      <button class="icon-btn" aria-label="Display"><svg width="20" height="20"><use href="#i-eye"/></svg></button>
    </div>
  </div>
  <section class="net flex-grow-1 position-relative" aria-label="Network editor">
    <div class="net-note">Non-Commercial Edition</div>
    <div class="net-kind">Geometry</div>
    <svg viewBox="0 0 1 1">
      <defs>
        <g id="plate"><path d="M19 0l-4 38M36 0l-4 38M92 0l-4 38M110 0l-4 38" stroke="#000" stroke-opacity=".35" stroke-width="1.500"/></g>
        <g id="ports"><circle cx="62" cy="-10" r="6"/><circle cx="62" cy="48" r="6"/></g>
      </defs>
      <circle cx="595" cy="587" r="61" fill="#456699"/><circle cx="595" cy="587" r="42" fill="#9273c9"/>
      <g stroke-width="1.500" stroke="#4a6fae"><path d="M239 355v70M239 482v76M595 355v70"/><path d="M595 482v76" stroke="#8a9a7a"/></g>
      <g fill="#b3b3b3"><use href="#ports" x="177" y="307"/><use href="#ports" x="177" y="434"/><use href="#ports" x="177" y="568"/><use href="#ports" x="533" y="307"/><use href="#ports" x="533" y="434"/><use href="#ports" x="533" y="568"/></g>
      <g fill="#cccccc" stroke="#888"><rect x="177" y="307" width="124" height="38" rx="5"/><rect x="177" y="434" width="124" height="38" rx="5"/><rect x="533" y="307" width="124" height="38" rx="5"/><rect x="533" y="434" width="124" height="38" rx="5"/></g>
      <rect x="177" y="568" width="124" height="38" rx="5" fill="#ffa61a" stroke="#a86a10"/>
      <rect x="532" y="567" width="126" height="40" rx="6" fill="#ffa61a" stroke="#ffd900" stroke-width="3"/>
      <path d="M643 568h9q5 0 5 5v28q0 5-5 5h-13z" fill="#00aeef"/>
      <rect x="533" y="568" width="124" height="38" rx="5" fill="none" stroke="#111"/>
      <use href="#plate" x="177" y="307"/><use href="#plate" x="177" y="434"/><use href="#plate" x="177" y="568"/><use href="#plate" x="533" y="307"/><use href="#plate" x="533" y="434"/><use href="#plate" x="533" y="568"/>
      <use href="#n-cube" x="224" y="309" width="30" height="31"/><use href="#n-tube" x="580" y="309" width="30" height="31"/>
      <use href="#n-xf" x="223" y="439" width="32" height="26"/><use href="#n-xf" x="579" y="439" width="32" height="26"/>
      <use href="#i-balls" x="223" y="569" width="32" height="32"/><use href="#i-balls" x="579" y="569" width="32" height="32"/>
    </svg>
    <div class="node-tag" style="left:313px;top:283px"><span class="kind">Box</span>handle</div>
    <div class="node-tag" style="left:669px;top:283px"><span class="kind">Tube</span>pillar</div>
    <div class="node-tag" style="left:313px;top:438px">transform1</div>
    <div class="node-tag" style="left:669px;top:438px">transform2</div>
    <div class="node-tag" style="left:313px;top:572px">copy1</div>
    <div class="node-tag" style="left:669px;top:572px">copy2</div>
  </section>
</div>

<script>
// Ground plane: projective map from floor units (u, v) to view pixels.
const w = (s, t) => 1 + 0.03977 * s - 0.3404 * t;
function project(u, v) {
  const s = (1 - u) / 2, t = v / 2, k = w(s, t);
  return ((1079.2 * s - 66.6 * t + 183.7) / k).toFixed(1) + " " + ((13.6 * s - 147.5 * t + 1204.6) / k).toFixed(1);
}
let thin = "", bold = "";
for (let i = -120; i <= 12; i++) {
  const seg = "M" + project(7, i / 5) + "L" + project(-23, i / 5);
  if (i % 5) thin += seg; else bold += seg;
}
for (let i = -115; i <= 35; i++) {
  const seg = "M" + project(i / 5, -24) + "L" + project(i / 5, 2.4);
  if (i % 5) thin += seg; else bold += seg;
}
document.getElementById("floor").innerHTML =
  `<path d="${thin}" stroke="#7d8f99" stroke-width="1.2" stroke-opacity=".85"/><path d="${bold}" stroke="#7a8b95" stroke-width="2.4" stroke-opacity=".75"/>`;

// Eighteen copies of the tube.
const tops = [211,266,321,376,430,484,538,592,645,699,752,804,857,909,961,1013,1065,1117];
const feet = [221,275,328,382,435,487,540,592,644,696,748,799,850,901,952,1003,1053,1102];
let out = "";
tops.forEach((a, i) => {
  const b = feet[i], f = i / 17, y1 = 617 - 6 * f, y2 = 1152 - 24 * f, wa = 33 - 3 * f, wb = 32 - 2 * f;
  out += `<path d="M${a} ${y1}q${wa / 2} -2 ${wa} 0L${b + wb} ${y2}q${-wb / 2} 4 ${-wb} 0z" fill="url(#pipe)"/>`;
  out += `<path d="M${a + 1} ${y1}L${b + 1} ${y2}" stroke="#0c0c0c" stroke-width="${1.4 + 1.4 * f}"/>`;
  for (const p of [.25, .5, .7, .87]) out += `<path d="M${a + wa * p} ${y1}L${b + wb * p} ${y2 + 1}" stroke="#6e6c6c" stroke-width="1" stroke-opacity=".6"/>`;
  out += `<path d="M${a} ${y1}q${wa / 2} -2 ${wa} 0" fill="none" stroke="#4e5870" stroke-width="2"/>`;
});
document.getElementById("pillars").innerHTML = out;
</script>
</body>
</html>
